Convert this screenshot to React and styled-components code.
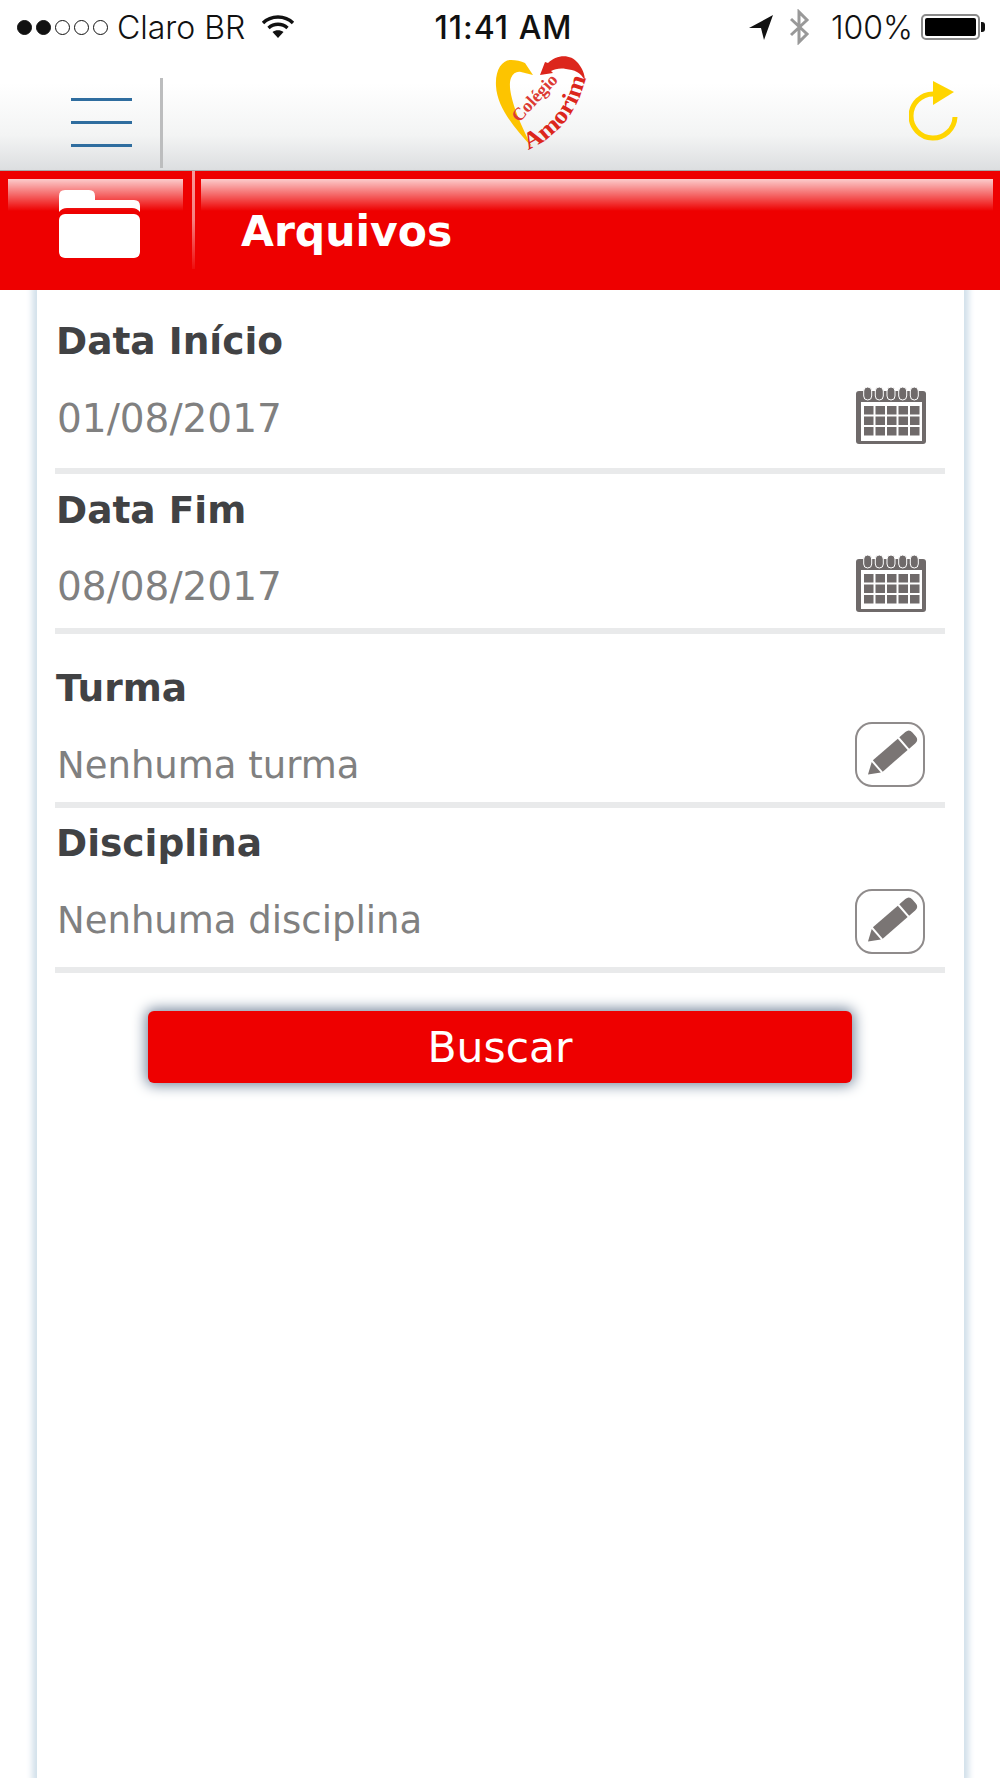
import React from 'react'
import styled, { createGlobalStyle } from 'styled-components'

const GlobalStyle = createGlobalStyle`
    html, body {
        margin: 0;
        padding: 0;
        background: #fff;
    }
    * {
        box-sizing: border-box;
    }
`

const Page = styled.div`
    width: 1000px;
    height: 1778px;
    overflow: hidden;
    display: flex;
    flex-direction: column;
    background: #fff;
`

const StatusBar = styled.div`
    height: 54px;
    flex: none;
    display: grid;
    grid-template-columns: 1fr auto 1fr;
    align-items: center;
    padding: 0 17px;
    font-family: Inter, "Liberation Sans", sans-serif;
    font-size: 32px;
    color: #111;
`

const StatusLeft = styled.div`
    display: flex;
    align-items: center;
`

const StatusRight = styled.div`
    display: flex;
    align-items: center;
    justify-content: flex-end;
`

const Dots = styled.div`
    display: flex;
    gap: 4px;
    margin-right: 9px;
`

const Dot = styled.span`
    width: 15px;
    height: 15px;
    border-radius: 50%;
    border: 1px solid #111;
    background: ${p => (p.$on ? '#111' : 'transparent')};
`

const Carrier = styled.span`
    font-weight: 300;
    margin-right: 16px;
`

const Clock = styled.span`
    font-weight: 500;
    letter-spacing: 1px;
    margin-left: 7px;
`

const Percent = styled.span`
    font-weight: 300;
    margin: 0 8px 0 21px;
`

const Battery = styled.div`
    width: 59px;
    height: 26px;
    border: 2px solid #8a8a8a;
    border-radius: 5px;
    padding: 2px;
    position: relative;
    margin-right: 3px;

    &::before {
        content: "";
        display: block;
        height: 100%;
        background: #000;
        border-radius: 2px;
    }

    &::after {
        content: "";
        position: absolute;
        right: -7px;
        top: 6px;
        width: 4px;
        height: 10px;
        border-radius: 0 3px 3px 0;
        background: #111;
    }
`

const Toolbar = styled.div`
    height: 117px;
    flex: none;
    display: flex;
    align-items: flex-start;
    background: linear-gradient(to bottom, #fff 0%, #fff 25%, #f3f4f4 70%, #dcdee0 100%);
    border-bottom: 1px solid #a9a9a9;
`

const MenuSlot = styled.div`
    width: 163px;
    height: 90px;
    margin-top: 24px;
    padding: 20px 0 0 71px;
    border-right: 3px solid #bcbdbe;
    display: flex;
    flex-direction: column;
    gap: 20px;
`

const MenuLine = styled.span`
    width: 61px;
    height: 3px;
    background: #2f6d9f;
`

const Logo = styled.svg`
    width: 100px;
    height: 100px;
    margin-left: 327px;
    flex: none;
    overflow: visible;
`

const Refresh = styled.svg`
    width: 50px;
    height: 60px;
    margin: 27px 41px 0 auto;
`

const RedBar = styled.div`
    position: relative;
    z-index: 1;
    height: 119px;
    flex: none;
    display: flex;
    padding: 0 7px 0 8px;
    background: #ee0000;
`

const Pane = styled.div`
    position: relative;
    flex: ${p => (p.$grow ? '1' : 'none')};
    width: ${p => (p.$grow ? 'auto' : '175px')};
    padding-left: ${p => p.$pad}px;

    &::before {
        content: "";
        position: absolute;
        left: 0;
        right: 0;
        top: 8px;
        height: 32px;
        background: linear-gradient(to bottom, rgba(255,255,255,.8), rgba(255,255,255,0));
    }
`

const Divider = styled.div`
    width: 3px;
    height: 98px;
    margin: 0 6px 0 9px;
    background: linear-gradient(to bottom, rgba(255,255,255,.6) 0%, rgba(255,255,255,.5) 50%, rgba(255,255,255,.05) 100%);
`

const Folder = styled.svg`
    position: relative;
    display: block;
    width: 81px;
    height: 68px;
    margin-top: 19px;
`

const Title = styled.h1`
    position: relative;
    margin: 36px 0 0 1px;
    font-family: "DejaVu Sans", sans-serif;
    font-size: 42.5px;
    font-weight: 700;
    line-height: 50px;
    color: #fff;
`

const Card = styled.main`
    flex: 1;
    margin: 0 36px 0 37px;
    padding: 0 19px 0 18px;
    background: #fff;
    box-shadow: 0 0 6px 5px #d3e1eb;
`

const Field = styled.div`
    height: ${p => p.$h}px;
    padding-top: ${p => p.$top}px;
    border-bottom: 6px solid #e9eaeb;
    display: flex;
    flex-direction: column;
`

const Label = styled.label`
    padding-left: 1px;
    margin-bottom: ${p => p.$gap}px;
    font-family: "DejaVu Sans", sans-serif;
    font-size: 37.5px;
    font-weight: 700;
    line-height: 40px;
    color: #414244;
`

const ValueRow = styled.div`
    height: 56px;
    display: flex;
    justify-content: space-between;
    align-items: flex-start;
    padding: 0 16px 0 2px;
`

const Value = styled.span`
    font-family: "DejaVu Sans", sans-serif;
    font-size: ${p => p.$size}px;
    line-height: 58px;
    color: #808080;
`

const CalendarIcon = styled.svg`
    width: 70px;
    height: 57px;
    margin: -3px 3px 0 0;
`

const EditButton = styled.div`
    width: 70px;
    height: 65px;
    margin: ${p => p.$shift}px 4px 0 0;
    border: 2px solid #8f8b8b;
    border-radius: 17px;
    display: flex;
`

const Pencil = styled.svg`
    width: 66px;
    height: 61px;
`

const SearchButton = styled.button`
    display: block;
    width: 704px;
    height: 72px;
    margin: 38px auto 0;
    border: none;
    border-radius: 6px;
    background: #ee0000;
    box-shadow: 0 0 14px 2px #6f8198;
    font-family: "DejaVu Sans", sans-serif;
    font-size: 42.5px;
    color: #fff;
`

const CALENDAR_GRAY = '#6f6a6a'

function Calendar() {
    const cols = [8, 19.5, 31, 42.5, 54]
    const rows = [19, 29.5, 40]
    return (
        <CalendarIcon viewBox="0 0 70 57">
            <rect x="0" y="4" width="70" height="53" rx="3" fill={CALENDAR_GRAY} />
            <rect x="5" y="15" width="61" height="39" fill="#fff" />
            {rows.map(y => cols.map(x => (
                <rect key={x + '-' + y} x={x} y={y} width="9.5" height="8.5" fill={CALENDAR_GRAY} />
            )))}
            {[11.7, 23.3, 35, 46.7, 58.3].map(x => (
                <rect key={x} x={x - 4} y="0" width="8" height="13" rx="4" fill={CALENDAR_GRAY} stroke="#fff" strokeWidth="1" />
            ))}
        </CalendarIcon>
    )
}

function Edit({ shift }) {
    return (
        <EditButton $shift={shift}>
            <Pencil viewBox="2 2 66 60">
                <g transform="translate(13 52) rotate(-41)" fill="#7a7574">
                    <polygon points="0,0 11,-7 11,7" />
                    <rect x="13" y="-7.5" width="33" height="15" />
                    <path d="M48 -7.5 H56 Q61 -7.5 61 -2.5 V2.5 Q61 7.5 56 7.5 H48 Z" />
                </g>
            </Pencil>
        </EditButton>
    )
}

export default function App() {
    return (
        <Page>
            <GlobalStyle />
            <StatusBar>
                <StatusLeft>
                    <Dots>
                        <Dot $on />
                        <Dot $on />
                        <Dot />
                        <Dot />
                        <Dot />
                    </Dots>
                    <Carrier>Claro BR</Carrier>
                    <svg width="34" height="24" viewBox="0 0 34 24" fill="none" stroke="#111" strokeWidth="3.4">
                        <path d="M2 8 C10 0 24 0 32 8" />
                        <path d="M7.5 13 C13 8 21 8 26.5 13" />
                        <path d="M17 23 L11.5 17 C14.5 14.5 19.5 14.5 22.5 17 Z" fill="#111" stroke="none" />
                    </svg>
                </StatusLeft>
                <Clock>11:41 AM</Clock>
                <StatusRight>
                    <svg width="24" height="25" viewBox="0 0 24 25" style={{ marginRight: 16 }}>
                        <path d="M0 13 L24 0 L15 25 L12 13 Z" fill="#111" />
                    </svg>
                    <svg width="21" height="36" viewBox="0 0 21 36" fill="none" stroke="#999" strokeWidth="3">
                        <path d="M2 10 L18 25 L10 33 V3 L18 11 L2 26" />
                    </svg>
                    <Percent>100%</Percent>
                    <Battery />
                </StatusRight>
            </StatusBar>

            <Toolbar>
                <MenuSlot>
                    <MenuLine />
                    <MenuLine />
                    <MenuLine />
                </MenuSlot>
                <Logo viewBox="0 4 100 100">
                    <path d="M42 97 C26 80 7 58 6 36 C5 20 12 10 21 10 C26 10 31 11 35 13 L43 25 L31 22 C27 21 23 23 21 28 C17 38 24 62 42 97 Z" fill="#fdc400" />
                    <path d="M50 25 L55 12 L58 13 C66 5 80 3 88 13 C92 18 95 24 95 31 C91 22 84 20 76 19 C70 18 65 19 61 21 L63 23 Z" fill="#dc261c" />
                    <text x="0" y="0" transform="translate(29 73) rotate(-47)" fontFamily="Liberation Serif" fontWeight="700" fontSize="18" textLength="58" lengthAdjust="spacingAndGlyphs" fill="#dc3a33">Colégio</text>
                    <path id="amorimCurve" d="M38 100 Q86 78 97 22" fill="none" />
                    <text fontFamily="Liberation Serif" fontWeight="700" fontSize="24" fill="#dc261c">
                        <textPath href="#amorimCurve" textLength="96" lengthAdjust="spacingAndGlyphs">Amorim</textPath>
                    </text>
                </Logo>
                <Refresh viewBox="0 0 50 60">
                    <path d="M24 13 A22 22 0 1 0 46 36" fill="none" stroke="#ffd500" strokeWidth="5" />
                    <path d="M24 0 L45 11 L24 24 Z" fill="#ffd500" />
                </Refresh>
            </Toolbar>

            <RedBar>
                <Pane $pad={51}>
                    <Folder viewBox="0 0 81 68">
                        <path d="M0 6 Q0 0 6 0 H30 Q36 0 36 6 V10 H75 Q81 10 81 16 V22 Q78 18 73 18 H8 Q3 18 0 22 Z" fill="#fff" />
                        <rect x="0" y="24" width="81" height="44" rx="6" fill="#fff" />
                    </Folder>
                </Pane>
                <Divider />
                <Pane $grow $pad={39}>
                    <Title>Arquivos</Title>
                </Pane>
            </RedBar>

            <Card>
                <Field $h={184} $top={31}>
                    <Label $gap={29}>Data Início</Label>
                    <ValueRow>
                        <Value $size={39}>01/08/2017</Value>
                        <Calendar />
                    </ValueRow>
                </Field>
                <Field $h={160} $top={16}>
                    <Label $gap={28}>Data Fim</Label>
                    <ValueRow>
                        <Value $size={39}>08/08/2017</Value>
                        <Calendar />
                    </ValueRow>
                </Field>
                <Field $h={174} $top={34}>
                    <Label $gap={29}>Turma</Label>
                    <ValueRow>
                        <Value $size={37}>Nenhuma turma</Value>
                        <Edit shift={-15} />
                    </ValueRow>
                </Field>
                <Field $h={165} $top={15}>
                    <Label $gap={29}>Disciplina</Label>
                    <ValueRow>
                        <Value $size={37}>Nenhuma disciplina</Value>
                        <Edit shift={-3} />
                    </ValueRow>
                </Field>
                <SearchButton>Buscar</SearchButton>
            </Card>
        </Page>
    )
}
